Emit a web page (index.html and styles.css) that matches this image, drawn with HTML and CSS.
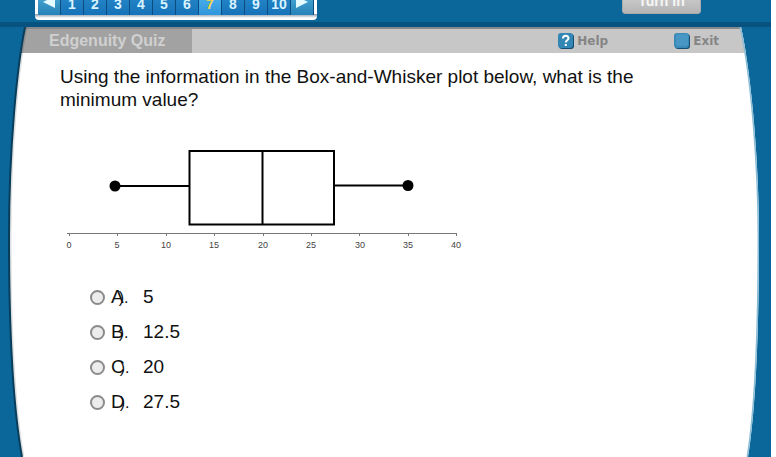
FILE: index.html
```html
<!DOCTYPE html>
<html lang="en">

<head>
  <meta charset="UTF-8">
  <meta name="viewport" content="width=device-width, initial-scale=1.0">
  <title>Edgenuity Quiz</title>
  <link rel="stylesheet" href="styles.css">
</head>

<body>
  <div class="quiz">
    <!-- Question navigation -->
    <header class="topbar">
      <nav class="pager" aria-label="Questions">
        <button type="button" class="arrow" aria-label="Previous">
          <svg width="12" height="12" viewBox="0 0 12 12"><path d="M12 0v12L0 6z" fill="#e4fbff"/></svg>
        </button>
        <button type="button">1</button>
        <button type="button">2</button>
        <button type="button">3</button>
        <button type="button">4</button>
        <button type="button">5</button>
        <button type="button">6</button>
        <button type="button" class="current">7</button>
        <button type="button">8</button>
        <button type="button">9</button>
        <button type="button">10</button>
        <button type="button" class="arrow" aria-label="Next">
          <svg width="12" height="12" viewBox="0 0 12 12"><path d="M0 0v12l12-6z" fill="#e4fbff"/></svg>
        </button>
      </nav>
      <button type="button" class="turn-in">Turn In</button>
    </header>

    <main class="panel">
      <!-- Curved sheet behind the content -->
      <svg class="sheet" viewBox="0 0 771 430" preserveAspectRatio="none" aria-hidden="true">
        <defs>
          <clipPath id="sheetClip">
            <path d="M25 0C17 40 9 120 9 210C9 300 13 380 22 430H748C756 380 759 300 759 210C759 140 752 50 741 0z"/>
          </clipPath>
        </defs>
        <path d="M25 0C17 40 9 120 9 210C9 300 13 380 22 430H748C756 380 759 300 759 210C759 140 752 50 741 0z" fill="#fff"/>
        <g clip-path="url(#sheetClip)">
          <path d="M0 0h771v26H0z" fill="#c7c7c7"/>
          <path d="M0 0h192v26H0z" fill="#a2a2a2"/>
          <path d="M0 0h771v2H0z" fill="#858a90"/>
          <path d="M25 0C17 40 9 120 9 210C9 300 13 380 22 430" fill="none" stroke="#000" stroke-opacity=".12" stroke-width="5"/>
          <path d="M741 0C752 50 759 140 759 210C759 300 756 380 748 430" fill="none" stroke="#8bbdd6" stroke-width="3"/>
        </g>
        <path d="M25 0C17 40 9 120 9 210C9 300 13 380 22 430" fill="none" stroke="#083e5c" stroke-width="2"/>
      </svg>

      <div class="titlebar">
        <h1>Edgenuity Quiz</h1>
        <a href="#help" class="help">
          <svg width="16" height="16" viewBox="0 0 16 16">
            <rect x="1" y="1" width="15" height="15" rx="3" fill="#174d70"/>
            <rect width="15" height="15" rx="3" fill="#3387b5"/>
            <path d="M5 5.500C5 2 10.500 2 10.500 5.200C10.500 7.300 7.800 7.300 7.800 9.500M7.800 11v2" fill="none" stroke="#fff" stroke-width="2"/>
          </svg>
          Help
        </a>
        <a href="#exit" class="exit">
          <svg width="16" height="16" viewBox="0 0 16 16">
            <rect x="1" y="1" width="15" height="15" rx="3" fill="#174d70"/>
            <rect width="15" height="15" rx="3" fill="#3a8ab8"/>
            <rect x="2" y="1" width="12" height="12" rx="2" fill="#4796c4"/>
          </svg>
          Exit
        </a>
      </div>

      <form class="question">
        <p>Using the information in the Box-and-Whisker plot below, what is the minimum value?</p>

        <svg class="plot" width="410" height="110" viewBox="60 145 410 110" role="img" aria-label="Box-and-whisker plot">
          <g fill="none" stroke="#000" stroke-width="2">
            <path d="M115 186H189M334 185.500H408"/>
            <path d="M189.500 151H334V224.500H189.500zM262.500 151V224"/>
          </g>
          <circle cx="115" cy="186" r="5.500"/>
          <circle cx="408" cy="185.500" r="5.500"/>
          <path d="M67 233.500H457M69.500 233v3M117.500 233v3M166.500 233v3M214.500 233v3M263.500 233v3M311.500 233v3M359.500 233v3M408.500 233v3M456.500 233v3" fill="none" stroke="#777"/>
          <g class="ticks">
            <text x="69" y="248">0</text>
            <text x="117" y="248">5</text>
            <text x="166" y="248">10</text>
            <text x="214" y="248">15</text>
            <text x="263" y="248">20</text>
            <text x="311" y="248">25</text>
            <text x="360" y="248">30</text>
            <text x="408" y="248">35</text>
            <text x="456" y="248">40</text>
          </g>
        </svg>

        <div class="choices">
          <label><input type="radio" name="answer" value="A"><span class="letter">A<span class="mark">).</span></span>5</label>
          <label><input type="radio" name="answer" value="B"><span class="letter">B<span class="mark">).</span></span>12.5</label>
          <label><input type="radio" name="answer" value="C"><span class="letter">C<span class="mark">).</span></span>20</label>
          <label><input type="radio" name="answer" value="D"><span class="letter">D<span class="mark">).</span></span>27.5</label>
        </div>
      </form>
    </main>
  </div>
</body>

</html>
```

FILE: styles.css
```css
* {
  box-sizing: border-box;
}

body {
  margin: 0;
  background-color: #fff;
  font-family: "Liberation Sans", Arial, sans-serif;
  color: #111;
}

.quiz {
  display: flex;
  flex-direction: column;
  min-height: 100vh;
  margin-right: 5px;
  overflow: hidden;
  background-color: #0b6699;
}

/* The bar runs off the top of the window */
.topbar {
  display: flex;
  justify-content: space-between;
  align-items: flex-start;
  height: 39px;
  margin-top: -12px;
  padding: 0 70px 0 35px;
  background: linear-gradient(#0b6699 34px, #07527f 34px);
}

.pager {
  display: flex;
  height: 32px;
  padding: 0 3px 5px;
  border-radius: 0 0 4px 4px;
  background: linear-gradient(#fff 26px, #8798a8 26px, #fff 30px);
}

.pager button {
  width: 23px;
  height: 27px;
  padding: 4px 0 0;
  border: none;
  border-right: 1px solid #0d4c80;
  background: linear-gradient(#2b8fd0, #1672b8);
  font-family: inherit;
  font-size: 14px;
  font-weight: bold;
  line-height: 24px;
  color: #d9f3ff;
  cursor: pointer;
}

.pager .arrow {
  display: flex;
  justify-content: center;
  padding-top: 8px;
  background: linear-gradient(#55b8dc, #2681b8);
}

.pager .current {
  background: linear-gradient(#55baf0, #3096dc);
  color: #f5d64a;
}

.turn-in {
  width: 79px;
  height: 26px;
  padding: 0;
  border: 1px solid #aaa;
  border-radius: 3px;
  background: linear-gradient(#d5d5d5, #b5b5b5);
  font-family: inherit;
  font-size: 14px;
  font-weight: bold;
  color: #f6f6f6;
  cursor: pointer;
}

.panel {
  position: relative;
  flex: 1;
}

.sheet {
  position: absolute;
  top: 0;
  left: 0;
  width: 100%;
  height: 100%;
}

.titlebar {
  position: relative;
  display: flex;
  align-items: center;
  height: 28px;
  padding: 0 52px 0 49px;
}

.titlebar h1 {
  flex: 1;
  margin: 0;
  font-size: 16px;
  color: #d0d0d0;
}

.titlebar a {
  display: flex;
  align-items: center;
  gap: 3px;
  font-family: "DejaVu Sans", sans-serif;
  font-size: 12px;
  font-weight: bold;
  color: #858585;
  text-decoration: none;
}

.titlebar .help {
  margin-right: 66px;
}

.question {
  position: relative;
  padding: 10px 60px 40px;
}

.question p {
  max-width: 620px;
  margin: 0;
  font-size: 19px;
  line-height: 23px;
}

.plot {
  display: block;
  margin-top: 34px;
}

.ticks {
  font-size: 9px;
  fill: #444;
  text-anchor: middle;
}

.choices {
  display: flex;
  flex-direction: column;
  align-items: flex-start;
  gap: 11px;
  margin-top: 30px;
  padding-left: 30px;
}

.choices label {
  display: flex;
  align-items: center;
  font-size: 19px;
  line-height: 24px;
}

.choices input {
  appearance: none;
  width: 15px;
  height: 15px;
  margin: 0 6px 0 0;
  border: 2px solid #8b8b8b;
  border-radius: 50%;
  background-color: #ececec;
}

.choices input:checked {
  background-color: #555;
}

.letter {
  width: 32px;
}

/* The bracket overlaps the letter */
.mark {
  margin-left: -5px;
  font-size: 16px;
  line-height: 16px;
}
```
